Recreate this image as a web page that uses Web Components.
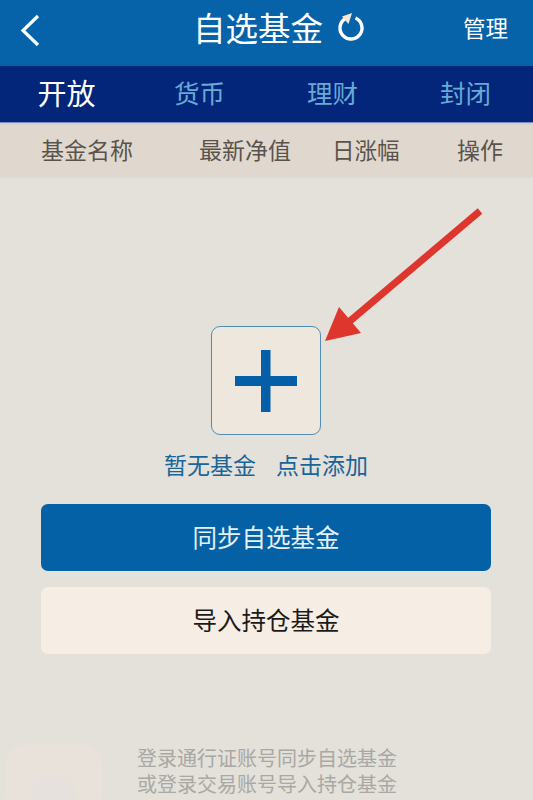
<!DOCTYPE html>
<html lang="zh">
<head>
<meta charset="utf-8">
<title>自选基金</title>
<style>
    html, body {
        margin: 0;
        height: 800px;
        overflow: hidden;
    }
    body {
        background: #e3e1da;
        font-family: "Noto Sans CJK SC", "Noto Sans", sans-serif;
    }
</style>
</head>
<body>
<fund-header>自选基金</fund-header>
<fund-tabs></fund-tabs>
<fund-columns></fund-columns>
<empty-state></empty-state>
<action-button kind="primary">同步自选基金</action-button>
<action-button kind="secondary">导入持仓基金</action-button>
<login-hint></login-hint>

<script>
class FundHeader extends HTMLElement {
    constructor() {
        super();
        this.attachShadow({ mode: 'open' });
    }

    connectedCallback() {
        this.shadowRoot.innerHTML = `
            <style>
                :host {
                    display: grid;
                    grid-template-columns: 173px auto 1fr;
                    align-items: center;
                    height: 66px;
                    padding: 0 25px 12px 20px;
                    box-sizing: border-box;
                    background: #0663aa;
                    color: #fff;
                }
                .back { width: 22px; height: 34px; display: block; margin-top: 5px; }
                .title {
                    display: flex;
                    align-items: center;
                    gap: 14px;
                    font-size: 32.5px;
                    line-height: 40px;
                }
                .title svg { width: 28px; height: 30px; display: block; margin-top: 1px; }
                .manage {
                    justify-self: end;
                    font-size: 22.5px;
                    line-height: 30px;
                }
            </style>
            <svg class="back" viewBox="0 0 22 34">
                <path d="M18 3 L3 17.5 L18 32" fill="none" stroke="#fff" stroke-width="3.2"/>
            </svg>
            <div class="title">
                <span><slot></slot></span>
                <svg viewBox="0 0 28 30">
                    <path d="M8.5 5.5 A11 11 0 1 0 18.5 5" fill="none" stroke="#fff" stroke-width="3.4"/>
                    <path d="M15 0 L5 3.5 L11.5 11 Z" fill="#f5e9d8"/>
                </svg>
            </div>
            <div class="manage">管理</div>
        `;
    }
}

class FundTabs extends HTMLElement {
    constructor() {
        super();
        this.attachShadow({ mode: 'open' });
    }

    connectedCallback() {
        this.shadowRoot.innerHTML = `
            <style>
                :host {
                    display: grid;
                    grid-template-columns: repeat(4, 133px);
                    justify-content: start;
                    align-items: center;
                    height: 57px;
                    padding-bottom: 5px;
                    box-sizing: border-box;
                    background: #03267a;
                    border-bottom: 1px solid #7f8fbb;
                    color: #69a9d6;
                    font-size: 25.5px;
                    text-align: center;
                }
                .active { color: #fff; font-size: 29px; }
            </style>
            <div class="active">开放</div>
            <div>货币</div>
            <div>理财</div>
            <div>封闭</div>
        `;
    }
}

class FundColumns extends HTMLElement {
    constructor() {
        super();
        this.attachShadow({ mode: 'open' });
    }

    connectedCallback() {
        this.shadowRoot.innerHTML = `
            <style>
                :host {
                    display: flex;
                    align-items: center;
                    height: 55px;
                    padding: 0 0 3px 41px;
                    box-sizing: border-box;
                    background: #e0d8cf;
                    border-bottom: 1px solid #dcd9d0;
                    box-shadow: inset 0 3px 2px -2px #cfc8bf;
                    color: #5a534c;
                    font-size: 23px;
                }
                .name { width: 158px; }
                .net { width: 133px; }
                .rise { width: 125px; font-size: 22.5px; }
            </style>
            <div class="name">基金名称</div>
            <div class="net">最新净值</div>
            <div class="rise">日涨幅</div>
            <div>操作</div>
        `;
    }
}

class EmptyState extends HTMLElement {
    constructor() {
        super();
        this.attachShadow({ mode: 'open' });
    }

    connectedCallback() {
        this.shadowRoot.innerHTML = `
            <style>
                :host {
                    display: flex;
                    flex-direction: column;
                    align-items: center;
                    position: relative;
                    height: 326px;
                    padding-top: 148px;
                    box-sizing: border-box;
                    color: #1a6499;
                    font-size: 23px;
                }
                .add {
                    display: flex;
                    align-items: center;
                    justify-content: center;
                    width: 110px;
                    height: 109px;
                    box-sizing: border-box;
                    margin-left: -1px;
                    background: #ede7de;
                    border: 1px solid #4f8db5;
                    border-radius: 9px;
                }
                .add svg { width: 62px; height: 62px; display: block; }
                .label {
                    display: flex;
                    gap: 20px;
                    margin-top: 12px;
                    margin-left: -1px;
                    line-height: 34px;
                }
                .arrow {
                    position: absolute;
                    left: 320px;
                    top: 28px;
                    width: 165px;
                    height: 140px;
                }
            </style>
            <div class="add">
                <svg viewBox="0 0 62 62">
                    <path d="M0 26 H26 V0 H35.5 V26 H62 V36 H35.5 V62 H26 V36 H0 Z" fill="#045fa8"/>
                </svg>
            </div>
            <div class="label"><span>暂无基金</span><span>点击添加</span></div>
            <svg class="arrow" viewBox="0 0 165 140">
                <path d="M160 5 L30 115" fill="none" stroke="#de352c" stroke-width="7"/>
                <path d="M5 135 L19 101 L41 127 Z" fill="#de352c"/>
            </svg>
        `;
    }
}

class ActionButton extends HTMLElement {
    constructor() {
        super();
        this.attachShadow({ mode: 'open' });
    }

    connectedCallback() {
        this.shadowRoot.innerHTML = `
            <style>
                :host {
                    display: flex;
                    align-items: center;
                    justify-content: center;
                    height: 67px;
                    padding-bottom: 2px;
                    box-sizing: border-box;
                    margin: 0 42px 16px 41px;
                    border-radius: 7px;
                    font-size: 24.5px;
                }
                :host([kind="primary"]) { background: #0561a6; color: #e6f2f7; }
                :host([kind="secondary"]) { background: #f6eee5; color: #1c1a18; }
            </style>
            <slot></slot>
        `;
    }
}

class LoginHint extends HTMLElement {
    constructor() {
        super();
        this.attachShadow({ mode: 'open' });
    }

    connectedCallback() {
        this.shadowRoot.innerHTML = `
            <style>
                :host {
                    display: flex;
                    gap: 35px;
                    height: 55px;
                    margin: 90px 0 0 5px;
                    color: #a9a8a4;
                    font-size: 20px;
                    line-height: 26px;
                }
                .logo {
                    flex: none;
                    display: flex;
                    align-items: flex-end;
                    justify-content: center;
                    width: 97px;
                    height: 55px;
                    background: #e8e2da;
                    border-radius: 22px 22px 0 0;
                }
                .logo span {
                    width: 44px;
                    height: 23px;
                    background: #e6e1dc;
                    border-radius: 14px 14px 0 0;
                }
                .text { padding-top: 1px; }
            </style>
            <div class="logo"><span></span></div>
            <div class="text">登录通行证账号同步自选基金<br>或登录交易账号导入持仓基金</div>
        `;
    }
}

customElements.define('fund-header', FundHeader);
customElements.define('fund-tabs', FundTabs);
customElements.define('fund-columns', FundColumns);
customElements.define('empty-state', EmptyState);
customElements.define('action-button', ActionButton);
customElements.define('login-hint', LoginHint);
</script>
</body>
</html>
